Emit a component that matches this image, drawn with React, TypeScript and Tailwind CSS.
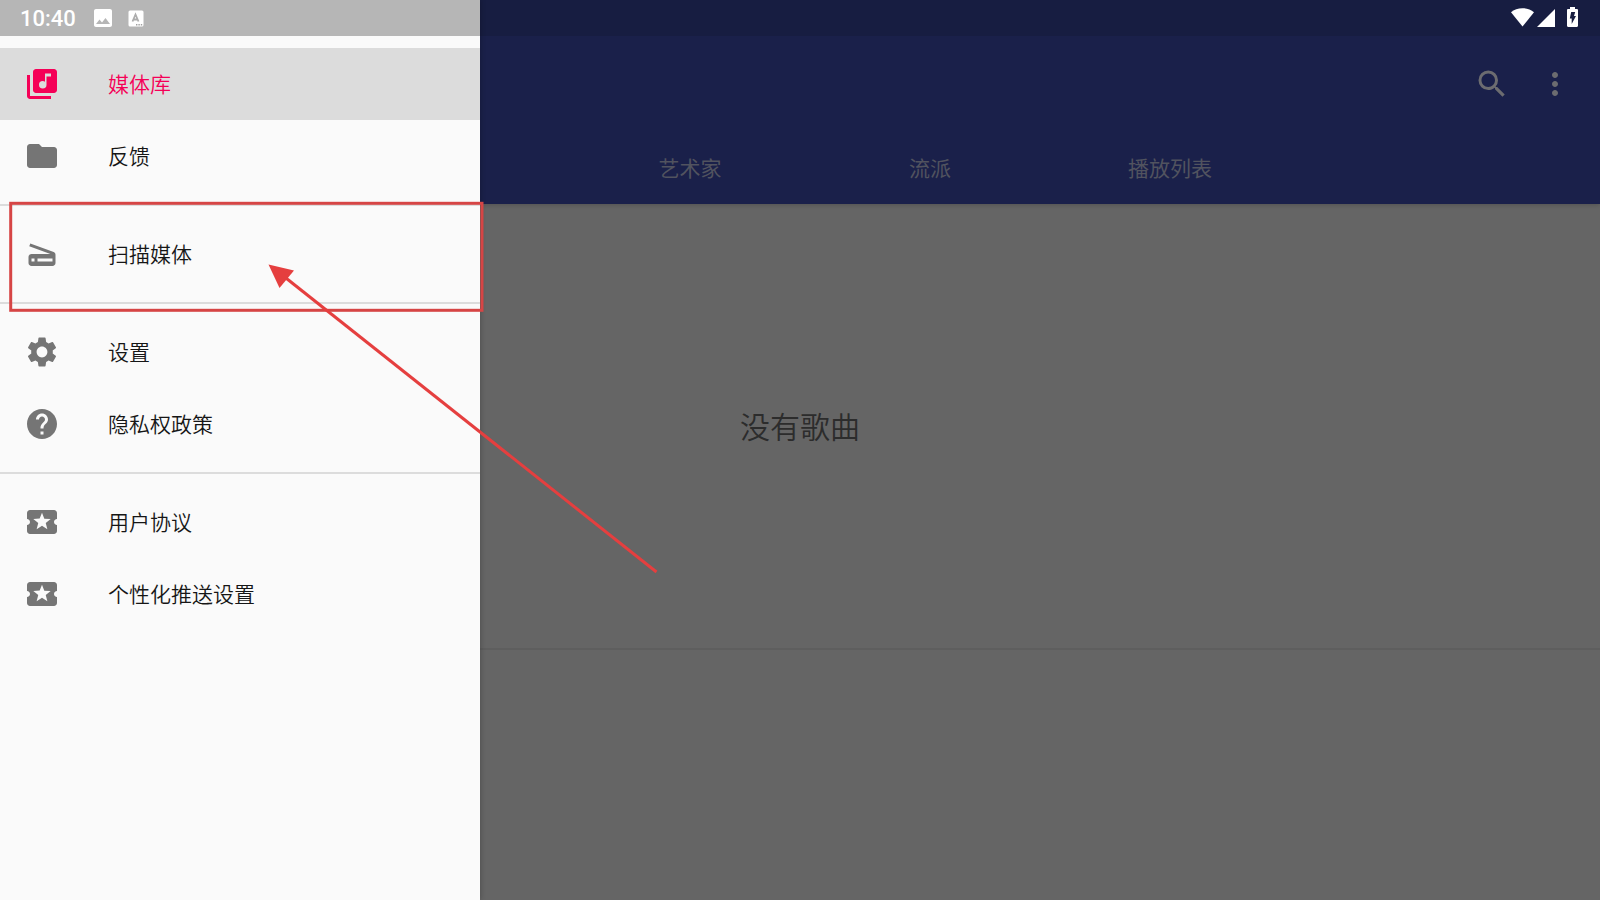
import type { IconType } from "react-icons";
import {
  MdFolder,
  MdHelp,
  MdImage,
  MdLibraryMusic,
  MdLocalPlay,
  MdMoreVert,
  MdScanner,
  MdSearch,
  MdSettings,
} from "react-icons/md";

type Entry = { label: string; icon: IconType; active?: boolean };

const groups: Entry[][] = [
  [
    { label: "媒体库", icon: MdLibraryMusic, active: true },
    { label: "反馈", icon: MdFolder },
  ],
  [{ label: "扫描媒体", icon: MdScanner }],
  [
    { label: "设置", icon: MdSettings },
    { label: "隐私权政策", icon: MdHelp },
  ],
  [
    { label: "用户协议", icon: MdLocalPlay },
    { label: "个性化推送设置", icon: MdLocalPlay },
  ],
];

const tabs = ["艺术家", "流派", "播放列表"];

function KeyboardBadge() {
  return (
    <svg viewBox="0 0 16 17" className="h-[17px] w-4" aria-hidden="true">
      <rect x="0.5" y="0.5" width="15" height="16" rx="1.5" fill="#fff" />
      <path
        d="M4.500 11.500 7.500 4.500 10.500 11.500M5.500 9.500h4"
        fill="none"
        stroke="#adadad"
        strokeWidth="1.8"
      />
      <path d="M8 14h1.400v1.400H8zM10.400 14h1.400v1.400h-1.400zM12.800 14h1.400v1.400h-1.400z" fill="#a0a0a0" />
    </svg>
  );
}

function SystemIcons() {
  return (
    <div className="flex items-center text-white">
      <svg viewBox="0 0 23 20" className="h-5 w-[23px]" fill="currentColor" aria-hidden="true">
        <path d="M0 5.300C3 2.600 7 1.200 11.500 1.200S20 2.600 23 5.300L11.500 19.600z" />
      </svg>
      <svg viewBox="0 0 18 20" className="ml-[3px] h-5 w-[18px]" fill="currentColor" aria-hidden="true">
        <path d="M18 2v18H0z" />
      </svg>
      <svg viewBox="0 0 11 20" className="ml-3 h-5 w-[11px]" aria-hidden="true">
        <path
          fill="currentColor"
          d="M3 0h5v2h1.8c.7 0 1.2.5 1.2 1.2v15.6c0 .7-.5 1.2-1.2 1.2H1.2C.5 20 0 19.500 0 18.800V3.200C0 2.500.5 2 1.200 2H3z"
        />
        <path fill="#181e41" d="M4.200 5h4L7 9h2l-4.300 8V11.500H2.800z" />
      </svg>
    </div>
  );
}

function Drawer() {
  return (
    <aside className="absolute inset-y-0 left-0 w-[480px] bg-[#fafafa] shadow-[1px_0_5px_rgba(0,0,0,0.2)]">
      <div className="flex h-9 items-center bg-[#b6b6b6] pl-5 text-white">
        <span className="pt-px font-[Roboto] text-[22px] font-medium leading-6">10:40</span>
        <MdImage className="ml-[15px] size-6" />
        <span className="ml-[13px]">
          <KeyboardBadge />
        </span>
      </div>
      <nav className="divide-y-2 divide-[#dcdcdc]">
        {groups.map((group, i) => (
          <ul key={i} className="py-3">
            {group.map(({ label, icon: Icon, active }) => (
              <li key={label}>
                <a
                  href="#"
                  aria-current={active ? "page" : undefined}
                  className={
                    active
                      ? "flex h-[72px] items-center gap-12 bg-[#dcdcdc] px-6 text-[#f50057]"
                      : "flex h-[72px] items-center gap-12 px-6 text-[#161616]"
                  }
                >
                  <Icon className={active ? "size-9" : "size-9 text-[#757575]"} />
                  <span className="pb-0.5 text-[21px] font-[350] leading-8">{label}</span>
                </a>
              </li>
            ))}
          </ul>
        ))}
      </nav>
    </aside>
  );
}

function Annotation() {
  return (
    <svg
      className="pointer-events-none absolute left-0 top-0 h-[600px] w-[700px]"
      viewBox="0 0 700 600"
      fill="none"
      aria-hidden="true"
    >
      <rect x="10.700" y="203.300" width="471.300" height="107" stroke="#d64545" strokeWidth="3" />
      <path d="M656.500 572 284 276.500" stroke="#e53f3f" strokeWidth="3" />
      <path d="M268.500 264.500 294 270.500 279.500 288z" fill="#e53f3f" />
    </svg>
  );
}

export default function App() {
  return (
    <div className="relative flex min-h-screen flex-col overflow-hidden bg-[#656565] font-['Noto_Sans_CJK_SC',sans-serif]">
      <header className="relative bg-[#1a204a] shadow-[0_1px_5px_rgba(0,0,0,0.2)]">
        <div className="flex h-9 items-center justify-end bg-[#171d41] pb-0.5 pr-[22px]">
          <SystemIcons />
        </div>
        <div className="flex h-24 items-center justify-end gap-[27px] pr-[27px] text-[#6c6c70]">
          <button type="button" aria-label="搜索">
            <MdSearch className="size-9" />
          </button>
          <button type="button" aria-label="更多选项">
            <MdMoreVert className="size-9" />
          </button>
        </div>
        <div role="tablist" className="flex h-[72px] pl-[570px]">
          {tabs.map((tab) => (
            <button
              key={tab}
              type="button"
              role="tab"
              aria-selected={false}
              className="w-60 pb-0.5 text-[21px] leading-8 text-[#51535f]"
            >
              {tab}
            </button>
          ))}
        </div>
      </header>
      <main className="flex flex-1 flex-col">
        <div className="flex h-[446px] items-center justify-center border-b-2 border-[#5e5e5e] pb-0.5">
          <p className="text-[30px] font-[350] leading-10 text-[#2c2c2c]">没有歌曲</p>
        </div>
      </main>
      <Drawer />
      <Annotation />
    </div>
  );
}
